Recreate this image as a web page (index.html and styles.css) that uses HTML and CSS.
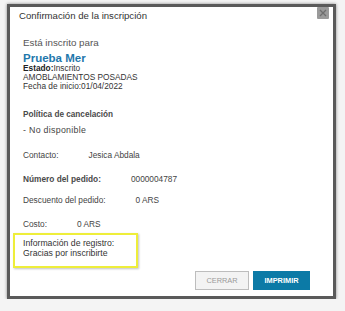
FILE: index.html
```html
<!DOCTYPE html>
<html lang="es">
<head>
    <meta charset="UTF-8">
    <meta name="viewport" content="width=device-width, initial-scale=1.0">
    <title>Confirmación de la inscripción</title>
    <link rel="stylesheet" href="styles.css">
</head>
<body>

<div class="dialog">
    <div class="dialog-header">
        <span class="dialog-title">Confirmación de la inscripción</span>
        <button class="close-btn" aria-label="Cerrar">
            <svg width="12" height="12" viewBox="0 0 12 12">
                <path d="M3 3 L9 9 M9 3 L3 9" stroke="#6e6e6e" stroke-width="1.3" fill="none"/>
            </svg>
        </button>
    </div>

    <div class="dialog-body">
        <p class="intro">Está inscrito para</p>
        <p class="event-name">Prueba Mer</p>
        <div class="details">
            <div><b>Estado:</b>Inscrito</div>
            <div>AMOBLAMIENTOS POSADAS</div>
            <div>Fecha de inicio:01/04/2022</div>
        </div>

        <p class="section-title">Política de cancelación</p>
        <p class="line">- No disponible</p>

        <div class="row row-contact">
            <span>Contacto:</span>
            <span>Jesica Abdala</span>
        </div>
        <div class="row row-order">
            <span class="strong">Número del pedido:</span>
            <span>0000004787</span>
        </div>
        <div class="row row-discount">
            <span>Descuento del pedido:</span>
            <span>0 ARS</span>
        </div>
        <div class="row row-cost">
            <span>Costo:</span>
            <span>0 ARS</span>
        </div>

        <div class="info-box">
            <div>Información de registro:</div>
            <div>Gracias por inscribirte</div>
        </div>
    </div>

    <div class="dialog-footer">
        <button class="btn btn-close">CERRAR</button>
        <button class="btn btn-print">IMPRIMIR</button>
    </div>
</div>

</body>
</html>
```

FILE: styles.css
```css
body {
    margin: 0;
    background-color: #f4f4f4;
    font-family: "Liberation Sans", Arial, sans-serif;
    color: #444;
}

p {
    margin: 0;
}

.dialog {
    width: 323px;
    height: 289px;
    margin: 4px 0 0 7px;
    background-color: #fff;
    border: 3px solid #5a5a5a;
    box-shadow: 0 0 3px rgba(0, 0, 0, 0.45);
    display: flex;
    flex-direction: column;
}

.dialog-header {
    display: flex;
    justify-content: space-between;
    align-items: flex-start;
    padding-left: 9px;
}

.dialog-title {
    font-size: 9.6px;
    line-height: 17px;
    color: #333;
}

.close-btn {
    width: 12px;
    height: 12px;
    margin-right: 4px;
    padding: 0;
    border: none;
    border-radius: 1px;
    background-color: #9a9a9a;
    display: flex;
    align-items: center;
    justify-content: center;
}

.dialog-body {
    padding-left: 13px;
}

.intro {
    margin-top: 13px;
    font-size: 9.8px;
    line-height: 12px;
    color: #555;
}

.event-name {
    margin-top: 3px;
    font-size: 11.5px;
    line-height: 12px;
    font-weight: bold;
    color: #1f78ac;
}

.details {
    font-size: 8.3px;
    line-height: 9px;
    color: #333;
}

.details b {
    color: #222;
}

.section-title {
    margin-top: 19px;
    font-size: 8.2px;
    line-height: 10px;
    font-weight: bold;
    color: #4a4a4a;
}

.line {
    margin-top: 5px;
    font-size: 8.8px;
    line-height: 10px;
    letter-spacing: 0.3px;
}

.row {
    display: flex;
    gap: 30px;
    font-size: 8.3px;
    line-height: 10px;
}

.row .strong {
    font-weight: bold;
    color: #4a4a4a;
}

.row-contact {
    margin-top: 15px;
}

.row-order {
    margin-top: 14px;
}

.row-discount {
    margin-top: 11px;
}

.row-cost {
    margin-top: 14px;
}

.info-box {
    width: 105px;
    margin: 4px 0 0 -10px;
    padding: 4px 8px 8px 8px;
    border: 2px solid #eeee3a;
    box-shadow: 1px 1px 2px rgba(0, 0, 0, 0.25);
    font-size: 8.7px;
    line-height: 9.5px;
    color: #333;
}

.dialog-footer {
    display: flex;
    justify-content: flex-end;
    gap: 4px;
    margin-top: 3px;
    padding-right: 23px;
}

.btn {
    height: 19px;
    padding: 0;
    font-family: "Liberation Sans", Arial, sans-serif;
    font-size: 7.4px;
    font-weight: bold;
    cursor: pointer;
}

.btn-close {
    width: 54px;
    background-color: #f3f3f3;
    border: 1px solid #bdbdbd;
    color: #9a9a9a;
    font-weight: normal;
}

.btn-print {
    width: 57px;
    background-color: #0c7aa6;
    border: 1px solid #0c7aa6;
    color: #fff;
}
```
